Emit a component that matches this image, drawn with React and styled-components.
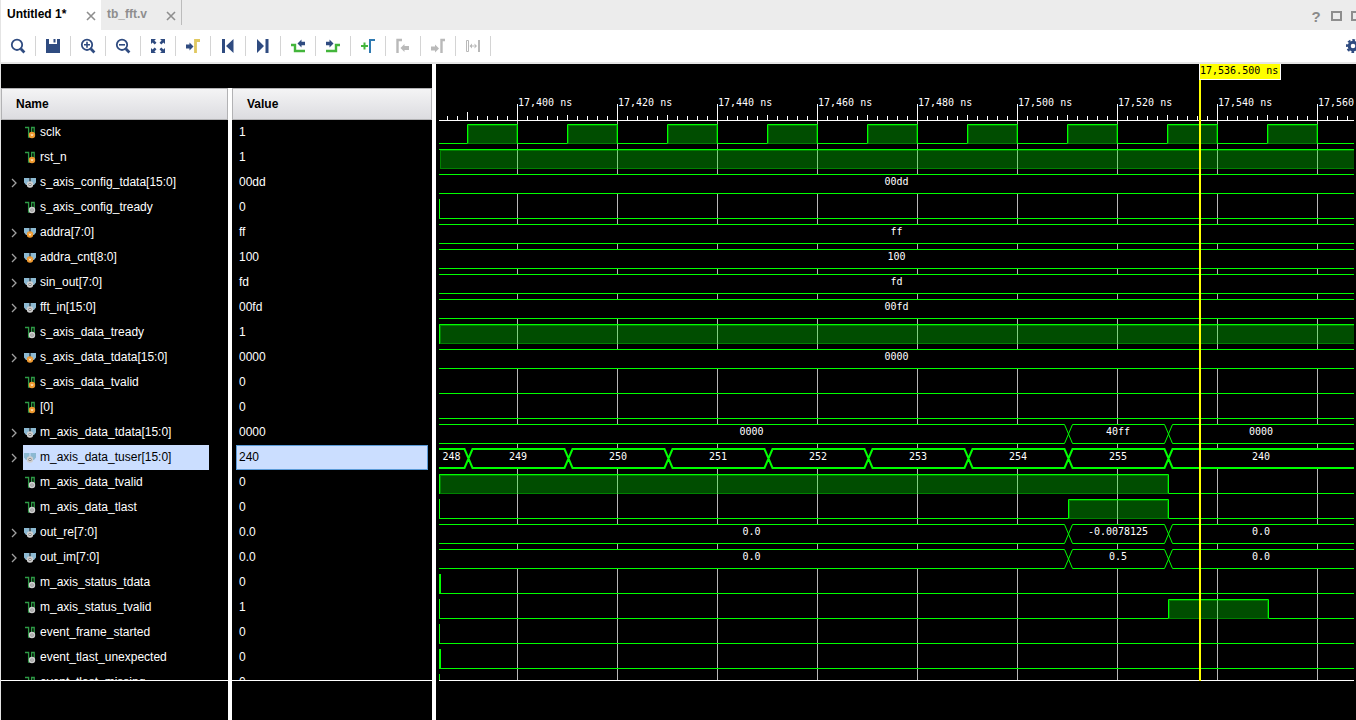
import React, { useEffect, useState } from "react";
import styled, { createGlobalStyle, css } from "styled-components";

const GlobalStyle = createGlobalStyle`
  body {
    margin: 0;
    background: #000;
    overflow: hidden;
    font-family: "Liberation Sans", Arial, sans-serif;
    font-size: 12px;
  }
  button {
    border: none;
    background: none;
    padding: 0;
    cursor: pointer;
  }
`;

const Page = styled.div`
  height: 100vh;
  display: flex;
  flex-direction: column;
  border-left: 1px solid #e4e4e4;
  box-sizing: border-box;
`;
const TabBar = styled.div`
  height: 30px;
  flex: none;
  display: flex;
  background: #ececec;
  overflow: hidden;
`;
const Tab = styled.div`
  width: ${({ $active }) => ($active ? 100 : 81)}px;
  height: ${({ $active }) => ($active ? 30 : 25)}px;
  box-sizing: border-box;
  padding: 0 5px 0 6px;
  display: flex;
  justify-content: space-between;
  background: ${({ $active }) => ($active ? "#fff" : "#ececec")};
  border-right: ${({ $active }) => ($active ? "none" : "1px solid #bcbcbc")};
`;
const TabTitle = styled.button`
  height: 28px;
  font: bold 12px "Liberation Sans", Arial, sans-serif;
  color: ${({ $active }) => ($active ? "#000" : "#8e8e8e")};
`;
const TabClose = styled.button`
  width: 10px;
  height: 32px;
`;
const WindowButtons = styled.div`
  margin: 2px -6px 0 auto;
  display: flex;
  align-items: center;
  gap: 9px;
`;
const HelpButton = styled.button`
  width: 12px;
  font: bold 15px "Liberation Sans", Arial, sans-serif;
  color: #8a8a8a;
`;
const SquareButton = styled.button`
  width: 11px;
  height: 10px;
  border: 2px solid #8e8e8e;
`;
const Toolbar = styled.div`
  height: 32px;
  flex: none;
  display: flex;
  align-items: center;
  background: #fff;
  border-bottom: 2px solid #e6e6e6;
  overflow: hidden;
`;
const ToolButton = styled.button`
  width: 35px;
  height: 20px;
  display: flex;
  align-items: center;
  justify-content: center;
  border-right: 1px solid #d4d4d4;
`;
const GearButton = styled.button`
  height: 20px;
  margin: 0 -4px 0 auto;
  display: flex;
  align-items: center;
`;
const Main = styled.div`
  flex: 1;
  min-height: 0;
  display: flex;
`;
const SignalPane = styled.div`
  width: 431px;
  flex: none;
  display: flex;
  flex-direction: column;
  padding-top: 24px;
  color: #fff;
  box-sizing: border-box;
`;
const TableClip = styled.div`
  flex: 1;
  min-height: 0;
  overflow: hidden;
`;
const SignalTable = styled.table`
  width: 100%;
  table-layout: fixed;
  border-spacing: 0;
`;
const HeadCell = styled.th`
  height: 32px;
  padding: 0;
  text-align: left;
  color: #000;
  ${({ $value }) =>
    $value
      ? css`
          border-left: 4px solid #fff;
        `
      : css`
          width: 227px;
        `}
`;
const HeadLabel = styled.div`
  height: 32px;
  line-height: 30px;
  box-sizing: border-box;
  padding-left: 14px;
  border: 1px solid #b2b2b4;
  background: linear-gradient(#f4f4f5, #dcdce0);
`;
const Cell = styled.td`
  height: 25px;
  padding: 0;
  border-left: ${({ $value }) => ($value ? "4px solid #fff" : "none")};
`;
const NameLine = styled.div`
  height: 25px;
  display: flex;
`;
const Expander = styled.span`
  width: 22px;
  display: flex;
  align-items: center;
  padding-left: 10px;
  box-sizing: border-box;
`;
const NameLabel = styled.button`
  width: 186px;
  display: flex;
  align-items: center;
  gap: 4px;
  padding: 0 0 2px 1px;
  box-sizing: border-box;
  font: 12px "Liberation Sans", Arial, sans-serif;
  white-space: nowrap;
  color: ${({ $selected }) => ($selected ? "#000" : "#fff")};
  background: ${({ $selected }) => ($selected ? "#cbdeff" : "none")};
`;
const ValueLabel = styled.div`
  height: 25px;
  line-height: 23px;
  margin: 0 4px;
  padding-left: 2px;
  box-sizing: border-box;
  border: 1px solid ${({ $selected }) => ($selected ? "#5b9bd8" : "transparent")};
  color: ${({ $selected }) => ($selected ? "#000" : "#fff")};
  background: ${({ $selected }) => ($selected ? "#cbdeff" : "none")};
`;
const SignalFooter = styled.div`
  height: 39px;
  flex: none;
  display: flex;
  border-top: 1px solid #fff;
`;
const FooterGap = styled.div`
  width: 4px;
  margin-left: 227px;
  background: #fff;
`;
const WavePane = styled.div`
  flex: 1;
  min-width: 0;
  display: flex;
  border-left: 4px solid #fff;
  padding: 0 2px 0 3px;
`;
const WaveArea = styled.div`
  flex: 1;
  min-width: 0;
  position: relative;
  display: flex;
  flex-direction: column;
  font-family: "DejaVu Sans Mono", "Liberation Mono", monospace;
  font-size: 10px;
  color: #fff;
`;
const Ruler = styled.svg`
  width: 100%;
  height: 57px;
  flex: none;
  display: block;
`;
const WaveClip = styled.div`
  flex: 1;
  min-height: 0;
  overflow: hidden;
`;
const WaveFooter = styled.div`
  height: 39px;
  flex: none;
  border-top: 1px solid #fff;
`;
const WaveRow = styled.div`
  height: 25px;
  display: grid;
`;
const WaveSvg = styled.svg`
  grid-area: 1 / 1;
  width: 100%;
  height: 25px;
`;
const BusLabels = styled.div`
  grid-area: 1 / 1;
  z-index: 1;
  display: flex;
  line-height: 22px;
  text-align: center;
`;
const BusLabel = styled.span`
  box-sizing: border-box;
  padding-right: ${({ $first }) => ($first ? 4 : 0)}px;
  flex: ${({ $width }) => ($width ? `0 0 ${$width}px` : 1)};
`;
const Cursor = styled.div`
  position: absolute;
  z-index: 2;
  top: 0;
  bottom: 39px;
  width: 2px;
  background: #ff0;
`;
const CursorTime = styled.div`
  width: 80px;
  height: 15px;
  line-height: 14px;
  white-space: nowrap;
  color: #000;
  background: #ff0;
  border: solid #fff;
  border-width: 0 1px 1px 1px;
`;

const PX_PER_NS = 5;
const START = 17384.4;
const CURSOR = 17536.5;
// left edge of the plot in the window
const PLOT_LEFT = 439;
// far enough right for any window
const END_X = 4000;
const HIGH = 3;
const LOW = 22;
const toX = (t) => Math.round((t - START) * PX_PER_NS);

const LOW_LINE = { kind: "bit", highs: [] };
const LOW_EDGE = { kind: "bit", highs: [], edge: 1 };
const LOW_GLITCH = { kind: "bit", highs: [], edge: 2 };
const constBus = (text) => ({ kind: "bus", labels: [text], changes: [] });
const clockHighs = Array.from({ length: 40 }, (_, i) => [
  17390 + i * 20,
  17400 + i * 20,
]);

const signals = [
  { name: "sclk", value: "1", mark: "orange", wave: { kind: "bit", highs: clockHighs } },
  { name: "rst_n", value: "1", mark: "orange", wave: { kind: "bit", highs: [[START, null]] } },
  { name: "s_axis_config_tdata[15:0]", value: "00dd", bus: true, wave: constBus("00dd") },
  { name: "s_axis_config_tready", value: "0", wave: LOW_EDGE },
  { name: "addra[7:0]", value: "ff", bus: true, mark: "orange", wave: constBus("ff") },
  { name: "addra_cnt[8:0]", value: "100", bus: true, mark: "orange", wave: constBus("100") },
  { name: "sin_out[7:0]", value: "fd", bus: true, wave: constBus("fd") },
  { name: "fft_in[15:0]", value: "00fd", bus: true, wave: constBus("00fd") },
  { name: "s_axis_data_tready", value: "1", wave: { kind: "bit", highs: [[START, null]], edge: 1 } },
  { name: "s_axis_data_tdata[15:0]", value: "0000", bus: true, mark: "orange", wave: constBus("0000") },
  { name: "s_axis_data_tvalid", value: "0", mark: "orange", wave: LOW_LINE },
  { name: "[0]", value: "0", mark: "orange", wave: LOW_LINE },
  {
    name: "m_axis_data_tdata[15:0]",
    value: "0000",
    bus: true,
    wave: { kind: "bus", labels: ["0000", "40ff", "0000"], changes: [17510.2, 17530.2] },
  },
  {
    name: "m_axis_data_tuser[15:0]",
    value: "240",
    bus: true,
    wave: {
      kind: "bus",
      labels: ["248", "249", "250", "251", "252", "253", "254", "255", "240"],
      changes: [17390.2, 17410.2, 17430.2, 17450.2, 17470.2, 17490.2, 17510.2, 17530.2],
    },
  },
  { name: "m_axis_data_tvalid", value: "0", wave: { kind: "bit", highs: [[START, 17530.2]], edge: 1 } },
  { name: "m_axis_data_tlast", value: "0", wave: { kind: "bit", highs: [[17510.2, 17530.2]], edge: 1 } },
  {
    name: "out_re[7:0]",
    value: "0.0",
    bus: true,
    wave: { kind: "bus", labels: ["0.0", "-0.0078125", "0.0"], changes: [17510.2, 17530.2] },
  },
  {
    name: "out_im[7:0]",
    value: "0.0",
    bus: true,
    wave: { kind: "bus", labels: ["0.0", "0.5", "0.0"], changes: [17510.2, 17530.2] },
  },
  { name: "m_axis_status_tdata", value: "0", wave: LOW_GLITCH },
  { name: "m_axis_status_tvalid", value: "1", wave: { kind: "bit", highs: [[17530.2, 17550.2]], edge: 1 } },
  { name: "event_frame_started", value: "0", wave: LOW_EDGE },
  { name: "event_tlast_unexpected", value: "0", wave: LOW_GLITCH },
  { name: "event_tlast_missing", value: "0", wave: LOW_EDGE },
];

const NAVY = "#2f4b80";
const GREEN = "#43b53b";
const GREY = "#b9b9b9";

const magnifier = (
  <>
    <circle cx="7" cy="6.800" r="5.200" fill="none" stroke={NAVY} strokeWidth="1.800" />
    <path d="M10.800 10.800l3.600 3.600" stroke={NAVY} strokeWidth="2.800" />
  </>
);

const tools = [
  { label: "Search", art: magnifier },
  {
    label: "Save",
    art: <path d="M1 1h3v5h8V1h3v14H1zM8.500 1h2v3.500h-2z" fill={NAVY} />,
  },
  {
    label: "Zoom in",
    art: (
      <>
        {magnifier}
        <path d="M4 6.800h6M7 3.800v6" stroke={NAVY} strokeWidth="1.600" />
      </>
    ),
  },
  {
    label: "Zoom out",
    art: (
      <>
        {magnifier}
        <path d="M4 6.800h6" stroke={NAVY} strokeWidth="1.600" />
      </>
    ),
  },
  {
    label: "Zoom fit",
    art: (
      <path
        d="M1 1h5L4.400 2.600 6.500 4.700 4.700 6.500 2.600 4.400 1 6zM15 1v5l-1.600-1.600-2.100 2.100-1.800-1.800 2.100-2.100L10 1zM1 15v-5l1.600 1.600 2.100-2.100 1.800 1.800-2.100 2.100L6 15zM15 15h-5l1.600-1.600-2.100-2.100 1.800-1.800 2.100 2.100L15 10z"
        fill={NAVY}
      />
    ),
  },
  {
    label: "Go to cursor",
    art: (
      <>
        <path d="M1 6.500h3.500v-2l4 4-4 4v-2H1z" fill={NAVY} />
        <path d="M10.500 15V2.500H15" fill="none" stroke="#e0c860" strokeWidth="2.800" />
      </>
    ),
  },
  {
    label: "Go to start",
    art: <path d="M2 1h3v14H2zM13.500 1v14L6 8z" fill={NAVY} />,
  },
  {
    label: "Go to end",
    art: <path d="M2 1v14l7-7zM10.500 1h3v14h-3z" fill={NAVY} />,
  },
  {
    label: "Previous transition",
    art: (
      <>
        <path d="M1 7h4v6h10" fill="none" stroke={GREEN} strokeWidth="2.400" />
        <path d="M7.500 5.500l4-4v2.200H15v3.600h-3.500V9.500z" fill={NAVY} />
      </>
    ),
  },
  {
    label: "Next transition",
    art: (
      <>
        <path d="M1 13h10V7h4" fill="none" stroke={GREEN} strokeWidth="2.400" />
        <path d="M8.500 5.500l-4-4v2.200H1v3.600h3.500V9.500z" fill={NAVY} />
      </>
    ),
  },
  {
    label: "Add marker",
    art: (
      <>
        <path d="M1 8h7M4.500 4.500v7" stroke={GREEN} strokeWidth="2" />
        <path d="M10 15V2h5" fill="none" stroke="#2f79b0" strokeWidth="2" />
      </>
    ),
  },
  {
    label: "Previous marker",
    art: (
      <>
        <path d="M2.500 15V2H7" fill="none" stroke={GREY} strokeWidth="2.400" />
        <path d="M5.500 10l4-4v2H14v4H9.500v2z" fill={GREY} />
      </>
    ),
  },
  {
    label: "Next marker",
    art: (
      <>
        <path d="M11.500 15V2H15" fill="none" stroke={GREY} strokeWidth="2.400" />
        <path d="M9 10.500l-4-4v2H1v4h4v2z" fill={GREY} />
      </>
    ),
  },
  {
    label: "Swap cursors",
    art: (
      <>
        <path d="M1.500 2.500h2v11h-2z" fill="none" stroke={GREY} />
        <path d="M13 2h2v12h-2zM4.500 8L7 5.500v5zM12 8L9.500 5.500v5zM6 7.500h4v1H6z" fill={GREY} />
      </>
    ),
  },
];

function Badge({ cx, cy, mark }) {
  return mark === "orange" ? (
    <>
      <circle cx={cx} cy={cy} r="3.200" fill="#f09a30" />
      <path d={`M${cx - 1} ${cy - 1}l1 2 1-2`} fill="none" stroke="#fbe3c0" />
    </>
  ) : (
    <>
      <circle cx={cx} cy={cy} r="2.400" fill="#777" stroke="#cfcfcf" strokeWidth="1.600" />
      <circle cx={cx} cy={cy} r="0.800" fill="#fff" />
    </>
  );
}

function SignalIcon({ bus, mark }) {
  return (
    <svg width="12" height="14" viewBox="0 0 12 14" aria-hidden="true">
      {bus ? (
        <>
          <path d="M0 3h5.500v4L3.500 10H2L0 7.500zM12 3H6.500v4l2 3H10l2-2.500z" fill="#8cb9d2" />
          <Badge cx={6} cy={9.5} mark={mark} />
        </>
      ) : (
        <>
          <path
            d="M1 2.500h3.600v9.500h3v-9.500h2.600V9"
            fill="none"
            stroke="#2d9a45"
            strokeWidth="1.300"
          />
          <Badge cx={8} cy={10} mark={mark} />
        </>
      )}
    </svg>
  );
}

function BitWave({ highs, edge }) {
  let line = "";
  highs.forEach(([from, to]) => {
    const x1 = toX(from);
    line +=
      x1 === 0
        ? `M0 ${HIGH + 0.5}`
        : `${line ? "" : `M0 ${LOW + 0.5}`}H${x1 + 0.5}V${HIGH + 0.5}`;
    line += to ? `H${toX(to) + 0.5}V${LOW + 0.5}` : `H${END_X}`;
  });
  line = line ? `${line}H${END_X}` : `M0 ${LOW + 0.5}H${END_X}`;

  return (
    <>
      {highs.map(([from, to]) => {
        const x = toX(from) + 1;
        const width = (to ? toX(to) : END_X) - x;
        return (
          <g key={from}>
            <rect x={x} y={HIGH} width={width} height={20} fill="#0f0" fillOpacity="0.3" />
            <rect
              x={x + 0.5}
              y={HIGH + 1.5}
              width={width - 1}
              height={18}
              fill="none"
              stroke="#0f0"
              strokeOpacity="0.3"
            />
          </g>
        );
      })}
      <path d={line} fill="none" stroke="#0f0" />
      {edge && <rect x="0" y={HIGH} width={edge} height={20} fill="#0f0" />}
    </>
  );
}

function BusWave({ changes, bold }) {
  const off = bold ? 0 : 0.5;
  const top = HIGH + off;
  const bottom = LOW + off;
  let up = `M0 ${top}`;
  let down = `M0 ${bottom}`;
  changes.forEach((t, i) => {
    const x = toX(t) + 0.5;
    const [a, b] = i % 2 ? [bottom, top] : [top, bottom];
    up += `H${x - 4}L${x + 4} ${b}`;
    down += `H${x - 4}L${x + 4} ${a}`;
  });
  return (
    <path
      d={`${up}H${END_X}${down}H${END_X}`}
      fill="none"
      stroke="#0f0"
      strokeWidth={bold ? 2 : 1}
    />
  );
}

function Wave({ wave, bold }) {
  const isBus = wave.kind === "bus";
  const stops = [0, ...(wave.changes || []).map(toX)];
  const gridPath = isBus ? `M0 0V${HIGH}M0 ${LOW + 1}V25` : "M0 0V25";
  return (
    <WaveRow>
      <WaveSvg>
        {Array.from({ length: 40 }, (_, i) => (
          <path
            key={i}
            d={gridPath}
            transform={`translate(${toX(17400 + i * 20) + 0.5} 0)`}
            stroke="#b8b8b8"
          />
        ))}
        {isBus ? <BusWave changes={wave.changes} bold={bold} /> : <BitWave {...wave} />}
      </WaveSvg>
      {isBus && (
        <BusLabels>
          {wave.labels.map((text, i) => (
            <BusLabel
              key={i}
              $first={i === 0 && wave.labels.length > 1}
              $width={stops[i + 1] ? stops[i + 1] - stops[i] : 0}
            >
              {text}
            </BusLabel>
          ))}
        </BusLabels>
      )}
    </WaveRow>
  );
}

function TimeRuler() {
  const [windowWidth, setWindowWidth] = useState(window.innerWidth);

  useEffect(() => {
    const handleResize = () => setWindowWidth(window.innerWidth);
    window.addEventListener("resize", handleResize);
    return () => window.removeEventListener("resize", handleResize);
  }, []);

  const ticks = [];
  for (let t = 17386; toX(t) < windowWidth - PLOT_LEFT; t += 2) {
    ticks.push(t);
  }

  return (
    <Ruler>
      {ticks.map((t) => {
        const x = toX(t) + 0.5;
        const major = t % 20 === 0;
        let top = 52;
        if (major) top = 40;
        else if (t === 17390) top = 48;
        else if (t % 10 === 0) top = 51;
        return (
          <g key={t}>
            <path d={`M${x} ${top}V57`} stroke="#fff" />
            {major && (
              <text x={toX(t) + 1} y="42" fill="#fff">
                {t.toLocaleString("en-US")} ns
              </text>
            )}
          </g>
        );
      })}
      <path d={`M0 56.500H${END_X}`} stroke="#fff" />
    </Ruler>
  );
}

function CloseIcon() {
  return (
    <svg width="10" height="10" viewBox="0 0 10 10" aria-hidden="true">
      <path d="M1 1l8 8M9 1l-8 8" stroke="#8e8e8e" strokeWidth="1.600" />
    </svg>
  );
}

function App() {
  const [selected, setSelected] = useState("m_axis_data_tuser[15:0]");

  return (
    <Page>
      <GlobalStyle />
      <TabBar>
        {["Untitled 1*", "tb_fft.v"].map((title, i) => (
          <Tab key={title} $active={i === 0}>
            <TabTitle $active={i === 0}>{title}</TabTitle>
            <TabClose aria-label="Close">
              <CloseIcon />
            </TabClose>
          </Tab>
        ))}
        <WindowButtons>
          <HelpButton>?</HelpButton>
          <SquareButton aria-label="Maximize" />
          <SquareButton aria-label="Float" />
        </WindowButtons>
      </TabBar>
      <Toolbar>
        {tools.map(({ label, art }) => (
          <ToolButton key={label} aria-label={label}>
            <svg width="16" height="16" viewBox="0 0 16 16">
              {art}
            </svg>
          </ToolButton>
        ))}
        <GearButton aria-label="Settings">
          <svg width="14" height="14" viewBox="0 0 14 14">
            <circle cx="7" cy="7" r="3.800" fill="none" stroke={NAVY} strokeWidth="3" />
            <circle
              cx="7"
              cy="7"
              r="6"
              fill="none"
              stroke={NAVY}
              strokeWidth="2"
              strokeDasharray="2.700 2.012"
              strokeDashoffset="1.350"
            />
          </svg>
        </GearButton>
      </Toolbar>
      <Main>
        <SignalPane>
          <TableClip>
            <SignalTable>
              <thead>
                <tr>
                  <HeadCell>
                    <HeadLabel>Name</HeadLabel>
                  </HeadCell>
                  <HeadCell $value>
                    <HeadLabel>Value</HeadLabel>
                  </HeadCell>
                </tr>
              </thead>
              <tbody>
                {signals.map(({ name, value, bus, mark }) => (
                  <tr key={name}>
                    <Cell>
                      <NameLine>
                        <Expander>
                          {bus && (
                            <svg width="6" height="10" viewBox="0 0 6 10" aria-hidden="true">
                              <path d="M1 1l4 4-4 4" fill="none" stroke="#a0a0a0" strokeWidth="1.300" />
                            </svg>
                          )}
                        </Expander>
                        <NameLabel $selected={name === selected} onClick={() => setSelected(name)}>
                          <SignalIcon bus={bus} mark={mark} />
                          {name}
                        </NameLabel>
                      </NameLine>
                    </Cell>
                    <Cell $value>
                      <ValueLabel $selected={name === selected}>{value}</ValueLabel>
                    </Cell>
                  </tr>
                ))}
              </tbody>
            </SignalTable>
          </TableClip>
          <SignalFooter>
            <FooterGap />
          </SignalFooter>
        </SignalPane>
        <WavePane>
          <WaveArea>
            <TimeRuler />
            <WaveClip>
              {signals.map(({ name, wave }) => (
                <Wave key={name} wave={wave} bold={name === selected} />
              ))}
            </WaveClip>
            <WaveFooter />
            <Cursor style={{ left: Math.floor((CURSOR - START) * PX_PER_NS) }}>
              <CursorTime>17,536.500 ns</CursorTime>
            </Cursor>
          </WaveArea>
        </WavePane>
      </Main>
    </Page>
  );
}

export default App;
